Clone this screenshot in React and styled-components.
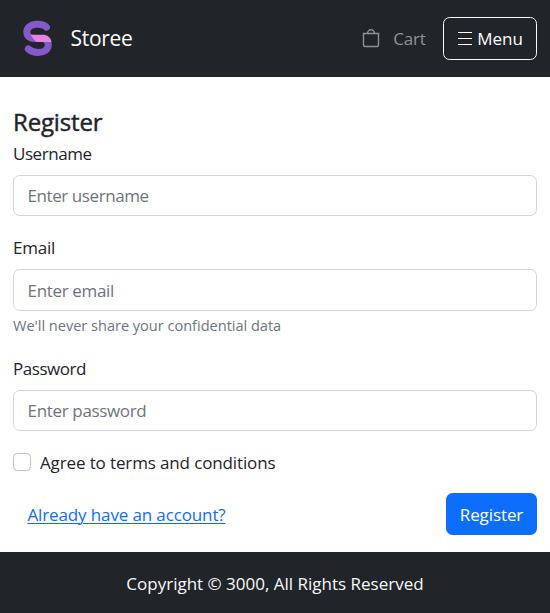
import React from "react";
import styled, { createGlobalStyle } from "styled-components";

const GlobalStyle = createGlobalStyle`
  *, *::before, *::after { box-sizing: border-box; }
  body {
    margin: 0;
    background: #fff;
    color: #212529;
    font: 400 17px/26.4px "Open Sans", "Noto Sans", sans-serif;
  }
`;

const Page = styled.div`
  display: flex;
  flex-direction: column;
  min-height: 613px;
`;

const Navbar = styled.header`
  display: flex;
  align-items: center;
  height: 77px;
  padding: 0 13px 0 22px;
  background: #212529;
  color: #fff;
`;

const Brand = styled.a`
  display: flex;
  align-items: center;
  gap: 17.5px;
  margin-right: auto;
  font-size: 21px;
  letter-spacing: -0.3px;
`;

const Logo = styled.svg`
  display: block;
  width: 31px;
  height: 37px;
`;

const CartLink = styled.a`
  display: flex;
  align-items: center;
  gap: 13px;
  margin-right: 17.5px;
  padding-top: 1px;
  color: #909294;
  letter-spacing: -0.2px;
`;

const BagIcon = styled.svg`
  display: block;
  width: 18px;
  height: 19px;
  margin-bottom: 1px;
`;

const MenuButton = styled.button`
  display: flex;
  align-items: center;
  justify-content: center;
  gap: 5px;
  width: 94px;
  height: 43px;
  padding: 2px 0 0;
  border: 1px solid #f8f9fa;
  border-radius: 6.6px;
  background: transparent;
  color: #fff;
  font: inherit;
`;

const MenuBars = styled.svg`
  display: block;
  width: 15px;
  height: 15px;
  margin-bottom: 2px;
`;

const Form = styled.form`
  display: flex;
  flex-direction: column;
  height: 475px;
  padding: 31.6px 13px 0;
`;

const Title = styled.h1`
  margin: 0;
  height: 31px;
  font-size: 24px;
  font-weight: 500;
  line-height: 26px;
  letter-spacing: -0.15px;
  -webkit-text-stroke: 0.45px currentColor;
`;

const Field = styled.div`
  display: flex;
  flex-direction: column;
  margin-bottom: 17.7px;
`;

const Label = styled.label`
  height: 26.4px;
  margin-bottom: 8.8px;
  line-height: 28.4px;
  letter-spacing: ${(p) => p.$tracking || 0}px;
`;

const Input = styled.input`
  height: 41.5px;
  padding: 0 13.6px;
  border: 1px solid #ced4da;
  border-radius: 6.6px;
  background: #fff;
  color: #212529;
  font: inherit;
  letter-spacing: ${(p) => p.$tracking || 0}px;
  &::placeholder { color: #6c757d; opacity: 1; }
`;

const EmailInput = styled(Input)`
  padding-top: 1.5px;
`;

const Help = styled.small`
  margin-top: 4.4px;
  height: 21.9px;
  color: #6c757d;
  font-size: 14.6px;
  line-height: 20px;
  letter-spacing: -0.03px;
`;

const CheckRow = styled.label`
  display: flex;
  align-items: center;
  gap: 9px;
  height: 26.4px;
  margin-bottom: 17.6px;
  line-height: 26px;
  letter-spacing: -0.13px;
`;

const CheckText = styled.span`
  padding-top: 2px;
`;

const Checkbox = styled.input`
  appearance: none;
  width: 18px;
  height: 18px;
  margin: 0;
  border: 1px solid #bfbfbf;
  border-radius: 4.4px;
  background: #fff;
`;

const Actions = styled.div`
  display: flex;
  align-items: center;
  justify-content: space-between;
  padding-left: 14.5px;
`;

const LoginLink = styled.a`
  padding-top: 2px;
  color: #0d6efd;
  text-decoration: underline;
  text-decoration-thickness: 1px;
  text-underline-offset: 2px;
  letter-spacing: -0.13px;
`;

const SubmitButton = styled.button`
  width: 91px;
  height: 42px;
  padding: 2px 0 0;
  border: 0;
  border-radius: 6.6px;
  background: #0d6efd;
  color: #fff;
  font: inherit;
  letter-spacing: -0.1px;
`;

const Footer = styled.footer`
  display: flex;
  align-items: center;
  justify-content: center;
  height: 61px;
  padding-top: 4px;
  background: #212529;
  color: #f8f9fa;
`;

export default function App() {
  return (
    <Page>
      <GlobalStyle />
      <Navbar>
        <Brand>
          <Logo viewBox="22 20 31 37" fill="none" aria-hidden="true">
            <path
              d="M46.5 27.2C43.5 23.8 39.5 24 35.5 24.3C30 25 26.8 28 26.8 32C26.8 36 30 38.5 34.5 38.5H42C46 38.5 48.3 41 48.3 44.8C48.3 49.5 44 52.5 38 52.5C34 52.5 31.2 51.4 28.3 49"
              stroke="#8459ca"
              strokeWidth="7"
              strokeLinecap="round"
            />
            <path d="M30.8 34.8H42.5C47.5 34.8 50.7 37.5 51.5 42H37.5C34.5 41.5 32.8 38 30.8 34.8Z" fill="#e783e3" />
          </Logo>
          Storee
        </Brand>
        <CartLink>
          <BagIcon viewBox="0 0 18 19" fill="none" stroke="currentColor" aria-hidden="true">
            <path d="M1.5 4.5H16.5V16Q16.5 17.5 15 17.5H3Q1.5 17.5 1.5 16Z" strokeWidth="1.4" />
            <path d="M5.5 4.5A3.5 3.7 0 0 1 12.5 4.5" strokeWidth="1.4" />
          </BagIcon>
          Cart
        </CartLink>
        <MenuButton type="button">
          <MenuBars viewBox="0 0 15 15" stroke="currentColor" shapeRendering="crispEdges" aria-hidden="true">
            <path d="M0.5 1.5H14.5M0.5 7.5H14.5M0.5 13.5H14.5" />
          </MenuBars>
          Menu
        </MenuButton>
      </Navbar>
      <Form>
        <Title>Register</Title>
        <Field>
          <Label htmlFor="username" $tracking={-0.45}>Username</Label>
          <Input id="username" placeholder="Enter username" $tracking={-0.43} />
        </Field>
        <Field>
          <Label htmlFor="email" $tracking={-0.2}>Email</Label>
          <EmailInput id="email" type="email" placeholder="Enter email" $tracking={-0.35} />
          <Help>We'll never share your confidential data</Help>
        </Field>
        <Field>
          <Label htmlFor="password" $tracking={-0.45}>Password</Label>
          <Input id="password" type="password" placeholder="Enter password" $tracking={-0.35} />
        </Field>
        <CheckRow>
          <Checkbox type="checkbox" />
          <CheckText>Agree to terms and conditions</CheckText>
        </CheckRow>
        <Actions>
          <LoginLink>Already have an account?</LoginLink>
          <SubmitButton type="button">Register</SubmitButton>
        </Actions>
      </Form>
      <Footer>Copyright © 3000, All Rights Reserved</Footer>
    </Page>
  );
}
